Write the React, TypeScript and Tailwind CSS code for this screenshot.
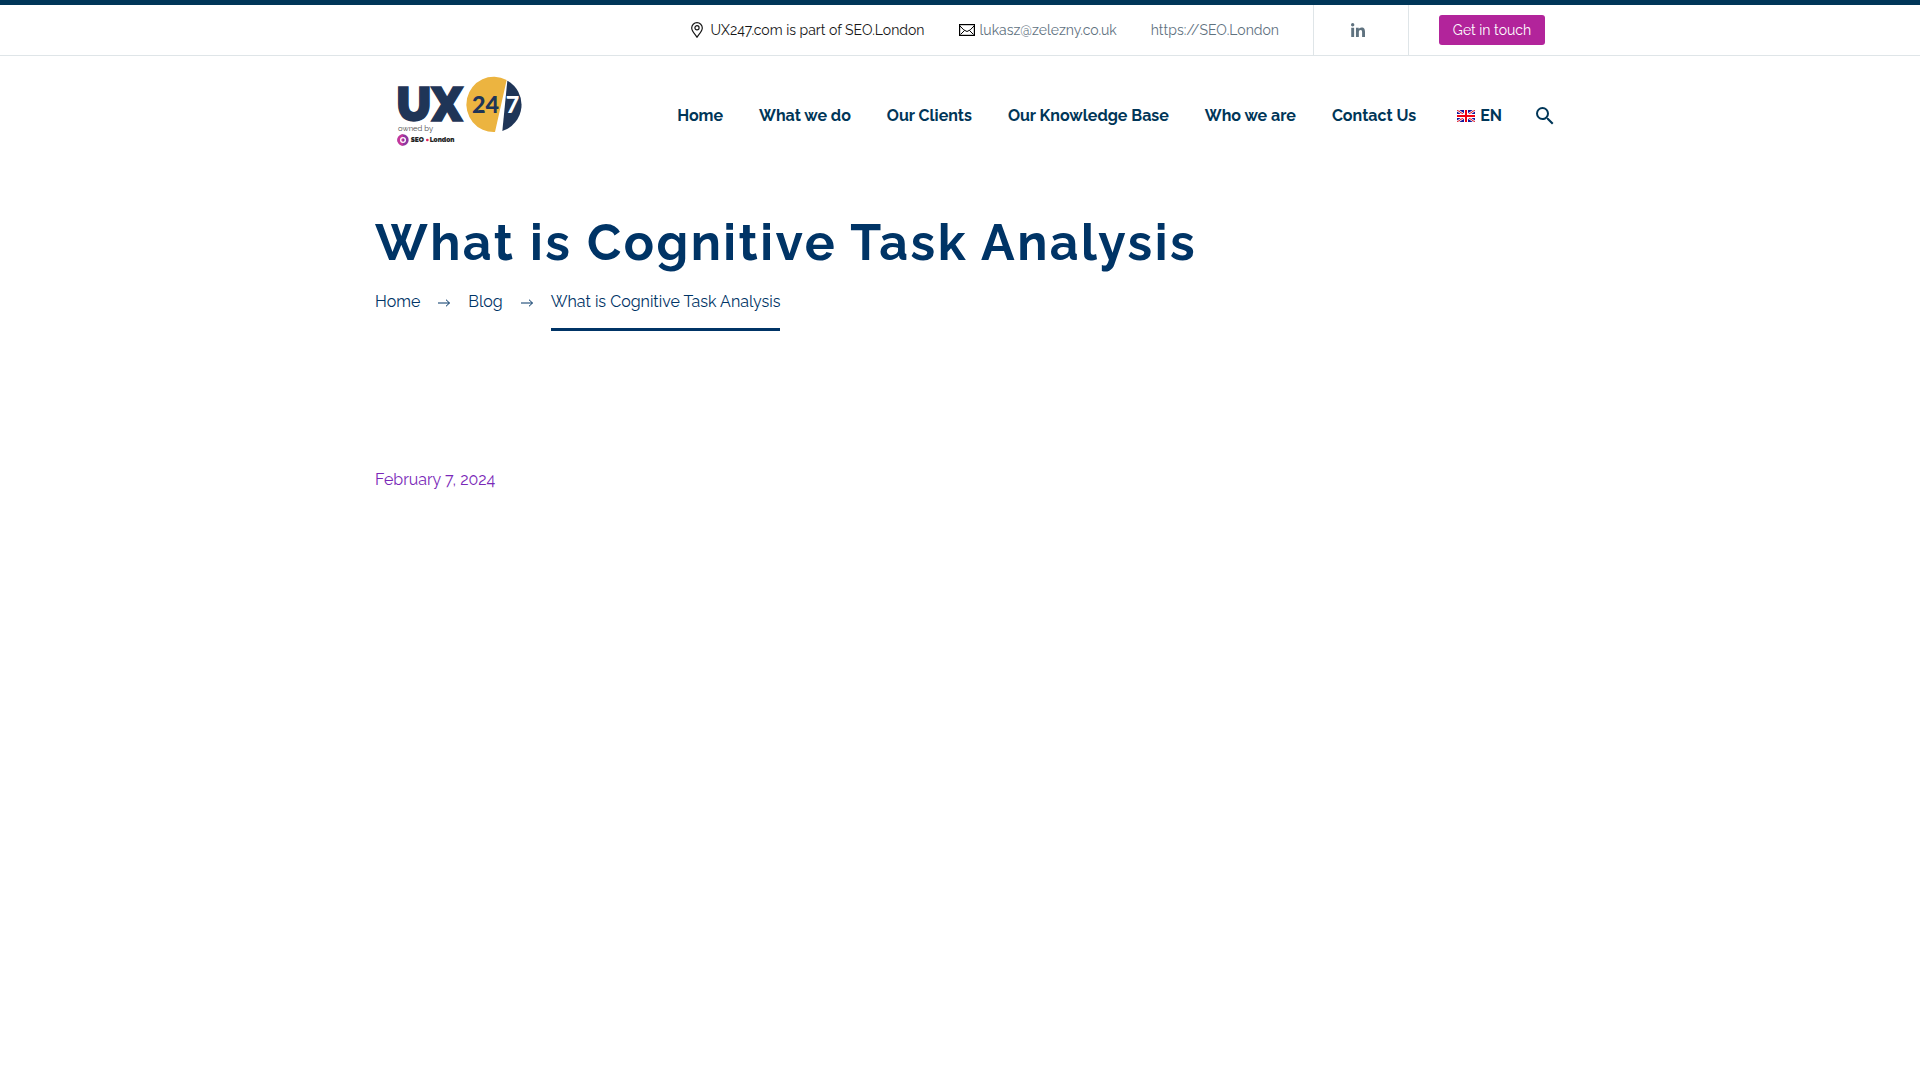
import React from "react";
import { FaLinkedinIn } from "react-icons/fa";
import { MdSearch } from "react-icons/md";

const navItems = ["Home", "What we do", "Our Clients", "Our Knowledge Base", "Who we are", "Contact Us"];

function Logo() {
  return (
    <svg viewBox="0 0 495 300" className="h-[100px] w-[165px]" role="img" aria-label="UX24/7 owned by SEO.London" fontFamily="Lato, sans-serif">
      <text x="64" y="183" fontSize="142" fontWeight="900" fill="#1f3557" stroke="#1f3557" strokeWidth="4" fontFamily="Raleway, Lato, sans-serif">UX</text>
      <path d="M395 60 A82 83 0 1 0 360 216 Z" fill="#ecb440" />
      <path d="M397 62 A84 83 0 0 1 382 213 Z" fill="#1f3557" />
      <text x="291" y="158" fontSize="70" fontWeight="900" fill="#1f3557">24</text>
      <text x="392" y="158" fontSize="70" fontWeight="900" fill="#ffffff">7</text>
      <text x="69" y="213" fontSize="23" fill="#444444" fontFamily="Raleway, Inter, sans-serif">owned by</text>
      <circle cx="84" cy="240" r="17" fill="#8f359f" />
      <path d="M84 223 A17 17 0 0 0 84 257 Z" fill="#c6379b" />
      <circle cx="84" cy="240" r="7" fill="none" stroke="#ffffff" strokeWidth="4" />
      <text x="107" y="247" fontSize="20" fontWeight="900" fill="#222222" fontFamily="Raleway, Inter, sans-serif">SEO</text>
      <circle cx="157" cy="240" r="4" fill="#e0245e" />
      <text x="164" y="247" fontSize="20" fontWeight="900" fill="#222222" fontFamily="Raleway, Inter, sans-serif">London</text>
    </svg>
  );
}

function PinIcon() {
  return (
    <svg viewBox="0 0 12 16" className="h-4 w-3" fill="none" stroke="#161616" strokeWidth="1.2" aria-hidden="true">
      <path d="M6 15.2 C4.4 12.4 .7 9.300 .7 6 A5.300 5.300 0 0 1 11.300 6 C11.300 9.300 7.600 12.400 6 15.200 Z" />
      <circle cx="6" cy="5.800" r="2.100" />
    </svg>
  );
}

function MailIcon() {
  return (
    <svg viewBox="0 0 16 12" className="h-3 w-4" fill="none" stroke="#000000" aria-hidden="true">
      <rect x=".6" y=".6" width="14.8" height="10.8" strokeWidth="1.200" />
      <path d="M1 2 Q5 7 8 7.500 Q11 7 15 2 M1.500 10.500 L5.500 6.500 M14.500 10.500 L10.500 6.500" strokeWidth="1" />
    </svg>
  );
}

function UkFlag() {
  return (
    <svg viewBox="0 0 18 12" className="h-3 w-[18px]" aria-hidden="true">
      <rect width="18" height="12" fill="#16169a" />
      <path d="M0 0 L18 12 M18 0 L0 12" stroke="#ffffff" strokeWidth="2.400" />
      <path d="M0 0 L18 12 M18 0 L0 12" stroke="#e01020" strokeWidth="1" />
      <path d="M9 0 V12 M0 6 H18" stroke="#ffffff" strokeWidth="4" />
      <path d="M9 0 V12 M0 6 H18" stroke="#f00010" strokeWidth="2" />
    </svg>
  );
}

function Arrow() {
  return (
    <svg viewBox="0 0 12 8" className="h-2 w-3" fill="none" stroke="#003466" aria-hidden="true">
      <path d="M0 4 H11.500 M8 .7 L11.500 4 L8 7.300" />
    </svg>
  );
}

export default function App() {
  return (
    <div className="min-h-screen bg-white font-['Raleway','Lato',sans-serif] text-base">
      <div className="border-t-[5px] border-b border-t-[#003658] border-b-[#dfe5e8]">
        <div className="mx-auto flex h-[50px] max-w-[1170px] items-center justify-end text-sm text-[#5f727f]">
          <div className="mr-[34px] flex items-center gap-[34px]">
            <span className="flex items-center gap-2 text-[#161616]">
              <PinIcon />
              UX247.com is part of SEO.London
            </span>
            <a href="mailto:lukasz@zelezny.co.uk" className="flex items-center gap-[5px]">
              <MailIcon />
              lukasz@zelezny.co.uk
            </a>
            <a href="https://SEO.London">https://SEO.London</a>
          </div>
          <div className="flex w-24 items-center justify-center self-stretch border-x border-[#dfe5e8] pt-0.5 pr-1.5">
            <a href="#linkedin" aria-label="LinkedIn">
              <FaLinkedinIn className="size-4" />
            </a>
          </div>
          <a href="#contact" className="ml-[30px] flex h-[30px] w-[106px] items-center justify-center rounded-[3px] bg-[#b2249b] text-white">
            Get in touch
          </a>
        </div>
      </div>

      <header className="mx-auto flex max-w-[1170px] items-center justify-between pt-1">
        <a href="#home"><Logo /></a>
        <nav className="-mr-3 flex items-center gap-9 pt-3 font-bold text-[#003658]">
          {navItems.map((item) => (
            <a key={item} href="#nav">{item}</a>
          ))}
          <a href="#en" className="ml-[5px] flex items-center gap-[5px]">
            <UkFlag />
            EN
          </a>
          <button type="button" aria-label="Search" className="-ml-[5px]">
            <MdSearch className="size-6" />
          </button>
        </nav>
      </header>

      <main className="mx-auto max-w-[1170px]">
        <h1 className="pt-[49px] text-[50px] leading-[68px] font-bold tracking-wider text-[#003466]">What is Cognitive Task Analysis</h1>
        <nav aria-label="Breadcrumb" className="mt-[13px] flex items-start gap-[18px] leading-6 text-[#003466]">
          <a href="#home">Home</a>
          <span className="flex h-6 items-center pt-0.5"><Arrow /></span>
          <a href="#blog">Blog</a>
          <span className="flex h-6 items-center pt-0.5"><Arrow /></span>
          <span className="border-b-[3px] border-[#003466] pb-3.5">What is Cognitive Task Analysis</span>
        </nav>
        <time dateTime="2024-02-07" className="mt-[137px] block leading-6 text-[#7a28b8]">February 7, 2024</time>
      </main>
    </div>
  );
}
